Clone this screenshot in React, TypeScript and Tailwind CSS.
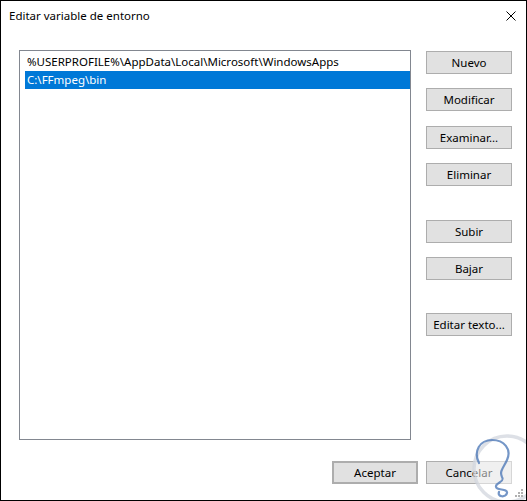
import React from "react";

const buttonClass =
  "flex h-[23px] w-[86px] items-center justify-center border border-[#adadad] bg-[#e1e1e1] text-[11.5px] text-black";

function DialogButton({
  label,
  className = "",
}: {
  label: string;
  className?: string;
}) {
  return <div className={`${buttonClass} ${className}`}>{label}</div>;
}

export default function App() {
  return (
    <div className="relative flex h-[501px] w-[527px] flex-col overflow-hidden border border-black bg-white font-['Noto_Sans','Liberation_Sans',sans-serif] text-[11.5px] text-black">
      {/* title bar */}
      <div className="flex h-[29px] items-center justify-between pl-[8px] pr-[10px]">
        <span className="leading-none">Editar variable de entorno</span>
        <svg width="10" height="10" viewBox="0 0 10 10" className="mt-[1px]">
          <path d="M0.5 0.5 L9.5 9.5 M9.5 0.5 L0.5 9.5" stroke="#000" strokeWidth="1" />
        </svg>
      </div>

      {/* body */}
      <div className="mt-[20px] flex pl-[18px]">
        <div className="h-[390px] w-[392px] border border-[#828790] bg-white pl-[5px] pt-[2px]">
          <div className="flex h-[18px] items-center pl-[2px] leading-none">
            %USERPROFILE%\AppData\Local\Microsoft\WindowsApps
          </div>
          <div className="flex h-[18px] items-center bg-[#0078d7] pl-[2px] leading-none text-white">
            C:\FFmpeg\bin
          </div>
        </div>

        <div className="ml-[15px] mt-[1px] flex flex-col">
          <DialogButton label="Nuevo" />
          <DialogButton label="Modificar" className="mt-[14px]" />
          <DialogButton label="Examinar..." className="mt-[15px]" />
          <DialogButton label="Eliminar" className="mt-[14px]" />
          <DialogButton label="Subir" className="mt-[34px]" />
          <DialogButton label="Bajar" className="mt-[14px]" />
          <DialogButton label="Editar texto..." className="mt-[33px]" />
        </div>
      </div>

      {/* footer */}
      <div className="mt-[21px] flex justify-end gap-[8px] pr-[14px]">
        <DialogButton label="Aceptar" className="border-2 border-[#0078d7]" />
        <DialogButton label="Cancelar" />
      </div>

      {/* watermark */}
      <svg
        className="pointer-events-none absolute left-[465px] top-[432px]"
        width="70"
        height="75"
        viewBox="0 0 70 75"
      >
        <circle cx="41" cy="36" r="33" fill="rgba(255,255,255,0.5)" stroke="rgba(210,214,222,0.75)" strokeWidth="3.5" />
        <path
          d="M13 30 C7 18 14 7 26 7 C38 7 46 16 41 27 C38 34 33 38 36 44 C39 49 31 49 30 53 C29 58 42 55 41 60 C40 65 31 64 33 59"
          fill="none"
          stroke="rgba(70,115,180,0.75)"
          strokeWidth="2.2"
          strokeLinecap="round"
        />
      </svg>

      {/* resize grip */}
      <svg
        className="pointer-events-none absolute right-[1px] bottom-[1px]"
        width="12"
        height="12"
        viewBox="0 0 12 12"
      >
        <rect x="8" y="2" width="2" height="2" fill="#b0b0b0" />
        <rect x="5" y="5" width="2" height="2" fill="#b0b0b0" />
        <rect x="8" y="5" width="2" height="2" fill="#b0b0b0" />
        <rect x="2" y="8" width="2" height="2" fill="#b0b0b0" />
        <rect x="5" y="8" width="2" height="2" fill="#b0b0b0" />
        <rect x="8" y="8" width="2" height="2" fill="#b0b0b0" />
      </svg>
    </div>
  );
}
